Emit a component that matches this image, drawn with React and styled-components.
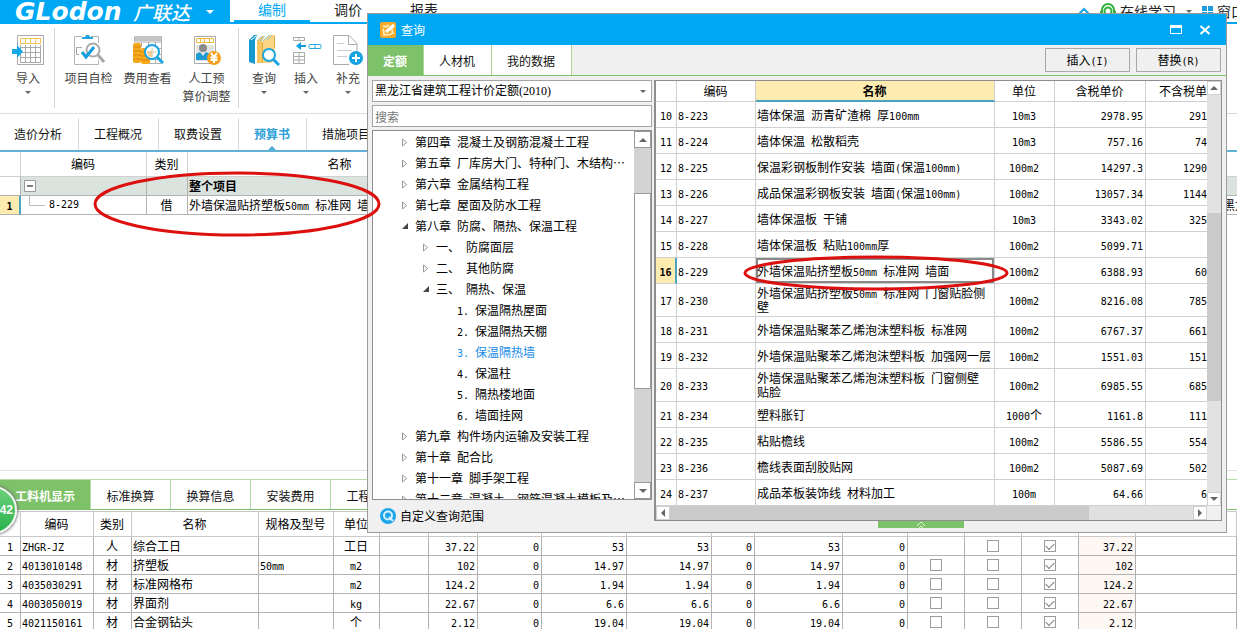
import React from 'react'
import styled, { css, createGlobalStyle } from 'styled-components'

const blue = '#00a8f3'
const green = '#7dc168'
const yellow = '#fdebb0'
const teal = '#4aa3c0'

const GlobalStyle = createGlobalStyle`
  * {
    box-sizing: border-box;
  }
  body {
    margin: 0;
    background: #fff;
    color: #000;
    font-family: 'Noto Sans CJK SC', 'Liberation Sans', sans-serif;
    font-size: 12px;
    line-height: 16px;
    overflow: hidden;
  }
  button, input, select {
    margin: 0;
    padding: 0;
    border: 0;
    border-radius: 0;
    background: none;
    color: inherit;
    font: inherit;
  }
  svg {
    display: block;
    flex: none;
  }
`

const Latin = styled.span`
  font-family: 'DejaVu Sans Mono', monospace;
  font-size: 10px;
  line-height: 10px;
  white-space: pre-wrap;
`

// half-width runs are set in a mono face, half as wide as a CJK character
const Text = ({ children }) =>
  String(children)
    .split(/([\x20-\x7e]+)/)
    .map((part, i) => (i % 2 ? <Latin key={i}>{part}</Latin> : part))

const Page = styled.div`
  position: relative;
  display: flex;
  flex-direction: column;
  height: 100vh;
  overflow: hidden;
`

/* header */

const Header = styled.header`
  display: flex;
  flex: none;
  height: 24px;
  font-size: 14px;
`

const Brand = styled.div`
  display: flex;
  align-items: center;
  width: 230px;
  padding-left: 15px;
  background: ${blue};
  color: #fff;
`

const BrandName = styled.span`
  width: 118px;
  font: italic bold 25px/24px 'DejaVu Sans', sans-serif;
  white-space: nowrap;
`

const BrandChinese = styled.span`
  margin-right: 16px;
  font-size: 19px;
  font-style: italic;
  font-weight: 500;
  line-height: 20px;
`

const Menu = styled.nav`
  display: flex;
  flex: 1;
  padding-left: 4px;
  border-bottom: 2px solid ${blue};
`

const MenuItem = styled.a`
  width: 76px;
  border-bottom: 2px solid ${p => (p.$active ? blue : 'transparent')};
  color: ${p => (p.$active ? blue : '#222')};
  line-height: 18px;
  text-align: center;
  text-decoration: none;
`

const HeaderTools = styled.div`
  display: flex;
  align-items: center;
  gap: 10px;
  margin-left: auto;
  width: 159px;
  height: 22px;
  overflow: hidden;
  white-space: nowrap;
`

const HeaderTool = styled.button`
  display: flex;
  flex: none;
  align-items: center;
  gap: 4px;
  color: #222;
`

/* toolbar */

const Toolbar = styled.div`
  display: flex;
  flex: none;
  height: 90px;
  padding: 4px 0;
  border-bottom: 1px solid #dcdcdc;
`

const ToolGroup = styled.div`
  display: flex;
  height: 80px;
  padding: 0 2px 0 4px;
  border-right: 1px solid #d8d8d8;
  &:last-child {
    border: 0;
  }
`

const ToolButton = styled.button`
  display: flex;
  flex-direction: column;
  align-items: center;
  width: ${p => p.$width}px;
  padding-top: 6px;
  color: #444;
  line-height: 18px;
  white-space: pre;
`

const ToolLabel = styled.span`
  margin: 3px 0 4px;
`

/* main tabs */

const MainTabs = styled.nav`
  display: flex;
  flex: none;
  height: 38px;
  margin-left: -1px;
  padding-top: 4px;
  border-bottom: 2px solid #62b1d6;
`

const MainTab = styled.a`
  display: flex;
  flex-direction: column;
  align-items: center;
  justify-content: flex-end;
  padding: 0 16px 0 15px;
  border-right: 1px solid #dadada;
  color: ${p => (p.$active ? '#2e9fd8' : '#111')};
  font-weight: ${p => (p.$active ? 'bold' : 'normal')};
  text-decoration: none;
  white-space: nowrap;
`

const TabMark = styled.span`
  height: 8px;
  padding-top: 4px;
`

/* tables */

const Table = styled.table`
  width: 100%;
  table-layout: fixed;
  border-collapse: separate;
  border-spacing: 0;
`

const cell = css`
  height: ${p => p.$height || 19}px;
  padding: 0 ${p => (p.$flush ? 0 : 2)}px 0 1px;
  border: solid ${p => p.$line || '#b2b2b2'};
  border-width: 0 ${p => (p.$flush ? 0 : 1)}px 1px 0;
  overflow: hidden;
  font-weight: ${p => (p.$bold ? 'bold' : 'normal')};
  text-align: ${p => p.$align || 'left'};
  white-space: nowrap;
`

const Th = styled.th`
  ${cell};
`

const Td = styled.td`
  ${cell};
  background: ${p => p.$bg || 'transparent'};
`

const RowNumber = styled.th`
  ${cell};
  padding: 0;
  ${p =>
    p.$current &&
    css`
      border-right: 2px solid ${teal};
      background: ${yellow};
      font-weight: bold;
    `}
`

const Budget = styled.section`
  flex: 1 0 318px;
`

const GroupRow = styled.tr`
  background: #dbe3df;
`

const Collapse = styled.button`
  display: block;
  margin-left: 2px;
`

const CodeWithBranch = styled.div`
  display: flex;
  align-items: center;
  gap: 4px;
`

/* bottom panel */

const Resources = styled.section`
  flex: none;
  padding-top: 8px;
  border-top: 1px solid #dfdfe4;
`

const ResourceTabs = styled.nav`
  display: flex;
  height: 31px;
  margin-bottom: 1px;
  border-top: 1px solid #b5dda9;
  border-bottom: 1px solid ${green};
`

const ResourceTab = styled.a`
  width: ${p => (p.$active ? 91 : 80)}px;
  padding: ${p => (p.$active ? '0 0 0 15px' : '0')};
  border-right: 1px solid #b5dda9;
  background: ${p => (p.$active ? green : '#fff')};
  color: ${p => (p.$active ? '#fff' : '#111')};
  font-weight: ${p => (p.$active ? 'bold' : 'normal')};
  line-height: 32px;
  text-align: ${p => (p.$active ? 'left' : 'center')};
  text-decoration: none;
  white-space: nowrap;
`

const ResourceTable = styled(Table)`
  border-top: 1px solid #c8c8c8;
`

const Checkbox = styled.input.attrs({ type: 'checkbox' })`
  appearance: none;
  display: grid;
  place-items: center;
  width: 12px;
  height: 12px;
  margin: 0 auto;
  border: 1px solid #9c9c9c;
  background: #fff;
  &:checked::after {
    content: '';
    width: 7px;
    height: 4px;
    margin-bottom: 2px;
    border: solid #777;
    border-width: 0 0 1px 1px;
    transform: rotate(-45deg);
  }
`

const Badge = styled.div`
  position: absolute;
  top: 486px;
  left: -31px;
  width: 48px;
  height: 48px;
  padding-right: 2px;
  border: 2px solid #f2f7f2;
  border-radius: 50%;
  background: linear-gradient(#6fd07c, #28b14c);
  box-shadow: 0 0 3px 1px #777;
  color: #fff;
  font: bold 12px/44px 'Liberation Sans', sans-serif;
  text-align: right;
`

/* query dialog */

const Dialog = styled.div`
  position: absolute;
  top: 13px;
  left: 367px;
  right: 10px;
  border: 1px solid #9b9b9b;
  background: #f0f0f0;
`

const TitleBar = styled.div`
  display: flex;
  align-items: center;
  height: 31px;
  padding: 0 14px 0 12px;
  background: ${blue};
  color: #fff;
`

const Title = styled.span`
  flex: 1;
  padding-left: 5px;
`

const WindowButton = styled.button`
  width: 13px;
  margin-left: 16px;
`

const DialogTabs = styled.div`
  display: flex;
  height: 31px;
  border-bottom: 1px solid ${green};
`

const DialogTab = styled.button`
  padding: 2px 16px 0 15px;
  border-right: 1px solid #a9d89b;
  background: ${p => (p.$active ? green : '#fff')};
  color: ${p => (p.$active ? '#fff' : '#111')};
  font-weight: ${p => (p.$active ? 'bold' : 'normal')};
`

const Actions = styled.div`
  display: flex;
  gap: 6px;
  margin-left: auto;
  padding: 3px 5px 3px 0;
`

const ActionButton = styled.button`
  width: 85px;
  border: 1px solid #a9a9a9;
`

const DialogBody = styled.div`
  display: grid;
  grid-template-columns: 280px minmax(0, 1fr);
  gap: 2px;
  padding: 4px 4px 3px;
`

const Side = styled.div`
  display: flex;
  flex-direction: column;
  gap: 3px;
`

const SelectBox = styled.div`
  display: grid;
  align-items: center;
  height: 22px;
  border: 1px solid #a5a5a5;
  background: #fff;
  > * {
    grid-area: 1 / 1;
  }
  > svg {
    justify-self: end;
    margin-right: 5px;
    pointer-events: none;
  }
`

const Select = styled.select`
  appearance: none;
  height: 20px;
  padding-left: 2px;
  font-family: 'Liberation Serif', 'Noto Sans CJK SC', serif;
`

const Search = styled.input`
  height: 22px;
  padding-left: 2px;
  border: 1px solid #a5a5a5;
  background: #fff;
  &::placeholder {
    color: #777;
  }
`

const Tree = styled.div`
  display: flex;
  height: 370px;
  border: 1px solid #8d8d92;
  background: #fff;
`

const TreeList = styled.ul`
  flex: 1;
  margin: 0;
  padding: 0;
  overflow: hidden;
  list-style: none;
`

const TreeItem = styled.li`
  display: flex;
  align-items: center;
  gap: 6px;
  height: 21px;
  padding-top: 1px;
  padding-left: ${p => 28 + p.$level * 21}px;
  color: ${p => (p.$selected ? '#1a8ce8' : 'inherit')};
  white-space: nowrap;
`

const TreeGap = styled.span`
  width: 8px;
`

const ScrollColumn = styled.div`
  display: flex;
  flex-direction: column;
  flex: none;
  width: ${p => p.$size}px;
  background: ${p => p.$track};
`

const ScrollRow = styled.div`
  display: flex;
  height: 14px;
  background: #e0e0e0;
`

const Thumb = styled.div`
  flex: none;
  margin-top: ${p => p.$offset}px;
  height: ${p => p.$length}px;
  border: ${p => (p.$outlined ? '1px solid #999' : '0')};
  background: ${p => (p.$outlined ? '#fff' : '#cacaca')};
`

const ThumbAcross = styled.div`
  flex: 0 1 419px;
  background: #cacaca;
`

const ScrollButton = styled.button`
  display: flex;
  flex: none;
  align-items: center;
  justify-content: center;
  width: ${p => p.$size}px;
  height: ${p => p.$size}px;
  border: 1px solid ${p => p.$edge || '#d0d0d0'};
  background: #fff;
`

const Spacer = styled.div`
  flex: 1;
`

const Corner = styled.div`
  width: 14px;
  background: #f0f0f0;
`

const Footer = styled.a`
  display: flex;
  align-items: center;
  gap: 4px;
  height: 26px;
  padding: 0 0 0 8px;
  color: inherit;
  text-decoration: none;
`

const Norms = styled.div`
  border: 1px solid #8d8d92;
  border-left-width: 2px;
  background: #fff;
`

const NormsView = styled.div`
  display: flex;
`

const NormsClip = styled.div`
  flex: 1;
  min-width: 0;
`

const NameHeading = styled(Th)`
  border-bottom: 2px solid ${teal};
  background: ${yellow};
`

const NameCell = styled(Td)`
  line-height: 14px;
  white-space: pre-line;
  ${p =>
    p.$current &&
    css`
      box-shadow: inset 0 0 0 2px #898989;
    `}
`

const Handle = styled.button`
  display: flex;
  justify-content: center;
  width: 86px;
  height: 7px;
  margin-left: 224px;
  background: ${green};
`

const Marks = styled.svg`
  position: absolute;
  top: 0;
  left: 0;
  pointer-events: none;
`

/* icons */

const arrowPoints = {
  down: '0,0 8,0 4,4',
  up: '0,4 8,4 4,0',
  left: '5,0 5,8 1,4',
  right: '1,0 1,8 5,4',
}

const Arrow = ({ dir = 'down', size = 8, color = '#666' }) => (
  <svg
    width={size}
    height={dir === 'up' || dir === 'down' ? size / 2 : size}
    viewBox={dir === 'up' || dir === 'down' ? '0 0 8 4' : '-1 0 8 8'}
  >
    <polygon points={arrowPoints[dir]} fill={color} />
  </svg>
)

const ImportIcon = () => (
  <svg width="32" height="32" viewBox="0 0 32 32" fill="none">
    <path d="M5.500 1.500h26v29h-26z" stroke="#aaa" />
    <path d="M8 4.500h21M8 9.500h21M8.500 4v5M13.500 4v5M18.500 4v5M23.500 4v5M28.500 4v5" stroke="#f5c454" />
    <path d="M8 13.500h21M8 18.500h21M8 23.500h21M8 28.500h21M8.500 11v17M13.500 11v17M18.500 11v17M23.500 11v17M28.500 11v17" stroke="#aaa" />
    <path d="M0 15h5v-4l6 6.500-6 6.500v-4H0z" fill="#12a9e6" />
  </svg>
)

const CheckIcon = () => (
  <svg width="32" height="32" viewBox="0 0 32 32" fill="none">
    <path d="M9 2.500H1.500v28h24V26M18 2.500h7.500V9" stroke="#b5b5b5" />
    <path d="M9 5V3h3l1-2h3l1 2h3v2z" fill="#27a3dc" />
    <path d="M9 13.500H3.500v7H6" stroke="#aaa" />
    <circle cx="20" cy="16" r="6.500" stroke="#aaa" strokeWidth="2" />
    <path d="M25 21l6 7" stroke="#aaa" strokeWidth="3" />
    <path d="M9 18l4 5 8-10" stroke="#119ddf" strokeWidth="3" />
  </svg>
)

const CostIcon = () => (
  <svg width="32" height="32" viewBox="0 0 32 32" fill="none">
    <path d="M2.500 2.500h27v27H15M29.500 8H2.500V3M9.500 8v5M16.500 8v21M23.500 8v21M10 14.500h19M10 20.500h19M10 25.500h19" stroke="#b0b0b0" />
    <path d="M3 2h26v5H3z" fill="#c4c4c4" />
    <rect x="1" y="9" width="8" height="20" rx="2" fill="#f7a91c" />
    <rect x="9" y="14" width="9" height="16" rx="2" fill="#f7a91c" />
    <path d="M1 13h8M1 17h8M1 21h8M1 25h8M9 18h9M9 22h9M9 26h9" stroke="#d98608" />
    <circle cx="20" cy="18" r="7" fill="#fff" stroke="#1ba4e2" strokeWidth="2" />
    <path d="M15 17h5v6c-3 0-5-2-5-6z" fill="#f9cf92" />
    <path d="M20 14v9M16 18h8" stroke="#d8c7a5" />
    <path d="M25 23l6 6" stroke="#1ba4e2" strokeWidth="3" />
  </svg>
)

const LabourIcon = () => (
  <svg width="32" height="32" viewBox="0 0 32 32" fill="none">
    <path d="M3.500 2.500h21v27h-21z" stroke="#aaa" />
    <path d="M5.500 4.500h17v4h-17zM9.500 4v5M13.500 4v5M18.500 4v5" stroke="#f4b934" />
    <path d="M5 11h18v16H5z" fill="#e4e4e4" />
    <circle cx="12" cy="14" r="4" fill="#8b8b8b" />
    <path d="M5 26v-6l4-2 3 4 3-4 4 2v6z" fill="#1d9bd2" />
    <circle cx="23" cy="24" r="7" fill="#f7a11a" />
    <path d="M20 19l3 4 3-4M23 23v6M19.500 23.500h7M19.500 26h7" stroke="#fff" strokeWidth="2" />
  </svg>
)

const QueryIcon = () => (
  <svg width="32" height="32" viewBox="0 0 32 32" fill="none">
    <path d="M1 6l5-5h3L7 6v24l-6-2z" fill="#1599cf" />
    <path d="M3 6l5-4" stroke="#fff" />
    <path d="M9 7l5-5h3l-3 5v22H9z" fill="#f5c661" />
    <path d="M15 7l6-6h6v25l-4 3h-8z" fill="#f9d584" />
    <path d="M9 7l5-5M12 7l5-5M15 7l6-6M19 6l5-5" stroke="#8cc9d8" />
    <path d="M14.500 8v21M26.500 2v12" stroke="#e0aa42" />
    <circle cx="21" cy="21" r="6" fill="#fff" stroke="#1ba4e2" strokeWidth="2" />
    <path d="M25 25l6 6" stroke="#1ba4e2" strokeWidth="3" />
  </svg>
)

const InsertIcon = () => (
  <svg width="32" height="32" viewBox="0 0 32 32" fill="none">
    <path d="M3.500 3.500h11v3h-11zM9 3v4M3.500 18.500h11v11h-11zM9 18v12M3 22.500h12M3 26h12" stroke="#aaa" />
    <path d="M6 12l5-4v3h5v2h-5v3z" fill="#119fdf" />
    <rect x="19" y="10.500" width="12" height="4" rx="1" stroke="#29a9df" />
    <path d="M25 10v5" stroke="#29a9df" />
  </svg>
)

const AddIcon = () => (
  <svg width="32" height="32" viewBox="0 0 32 32" fill="none">
    <path d="M17 30.500H1.500v-29H17l8 8V17M16.500 2v8.500H25" stroke="#aaa" />
    <path d="M5 9.500h7M5 16.500h15M5 22.500h10" stroke="#ccc" />
    <circle cx="24" cy="24" r="7" fill="#17a2e1" />
    <path d="M24 20v8M20 24h8" stroke="#fff" strokeWidth="2" />
  </svg>
)

const HeadsetIcon = () => (
  <svg width="16" height="18" viewBox="0 0 16 18" fill="none" stroke="#2fb13c">
    <path d="M2 11V8a6 6 0 0 1 12 0v3" strokeWidth="2" />
    <circle cx="8" cy="9" r="3.500" strokeWidth="2" />
    <path d="M1 9v4M15 9v4" strokeWidth="2" />
    <path d="M5 14c2 2 5 2 7 0" />
  </svg>
)

const GridIcon = () => (
  <svg width="11" height="11" viewBox="0 0 11 11" fill="#1b9de0">
    <path d="M0 0h5v5H0zM6 0h5v5H6zM0 6h5v5H0zM6 6h5v5H6z" />
  </svg>
)

const DialogIcon = () => (
  <svg width="16" height="16" viewBox="0 0 16 16" fill="none">
    <rect width="16" height="16" rx="2" fill="#f7a827" />
    <path d="M3 4c2 1 4 1 6-1M3 7c1 2 1 4 1 6 3 0 6 0 9-2-1-1-1-3-1-5" stroke="#ffe6b0" strokeWidth="2" />
    <path d="M6 10l8-7" stroke="#fff" strokeWidth="3" />
  </svg>
)

const RangeIcon = () => (
  <svg width="16" height="16" viewBox="0 0 16 16" fill="none">
    <circle cx="8" cy="8" r="8" fill="#1ea5e8" />
    <circle cx="8" cy="7.500" r="4" stroke="#d8f1ff" strokeWidth="2" />
    <path d="M9 9l4 4" stroke="#d8f1ff" strokeWidth="2" />
  </svg>
)

const TreeArrow = ({ open }) => (
  <svg width="8" height="9" viewBox="0 0 8 9">
    {open ? (
      <path d="M7 1v6H1z" fill="#444" />
    ) : (
      <path d="M1.500 1v7l4-3.500z" fill="#fff" stroke="#999" />
    )}
  </svg>
)

/* data */

const toolGroups = [
  [{ label: '导入', width: 48, icon: ImportIcon, menu: true }],
  [
    { label: '项目自检', width: 59, icon: CheckIcon },
    { label: '费用查看', width: 59, icon: CostIcon },
    { label: '人工预\n算价调整', width: 59, icon: LabourIcon },
  ],
  [
    { label: '查询', width: 42, icon: QueryIcon, menu: true },
    { label: '插入', width: 42, icon: InsertIcon, menu: true },
    { label: '补充', width: 42, icon: AddIcon, menu: true },
  ],
]

const mainTabs = ['造价分析', '工程概况', '取费设置', '预算书', '措施项目']
const resourceTabs = ['工料机显示', '标准换算', '换算信息', '安装费用', '工程费用']

const resourceColumns = [
  21, 73, 38, 127, 75, 46, 49, 49, 64, 85, 85, 43, 88, 65, 57, 57, 57, 57,
]
const resourceHeads = ['', '编码', '类别', '名称', '规格及型号', '单位']

const resources = [
  ['ZHGR-JZ', '人', '综合工日', '', '工日', '37.22', '53'],
  ['4013010148', '材', '挤塑板', '50mm', 'm2', '102', '14.97'],
  ['4035030291', '材', '标准网格布', '', 'm2', '124.2', '1.94'],
  ['4003050019', '材', '界面剂', '', 'kg', '22.67', '6.6'],
  ['4021150161', '材', '合金钢钻头', '', '个', '2.12', '19.04'],
]

const tree = [
  [0, '第四章 混凝土及钢筋混凝土工程', 'closed'],
  [0, '第五章 厂库房大门、特种门、木结构…', 'closed'],
  [0, '第六章 金属结构工程', 'closed'],
  [0, '第七章 屋面及防水工程', 'closed'],
  [0, '第八章 防腐、隔热、保温工程', 'open'],
  [1, '一、 防腐面层', 'closed'],
  [1, '二、 其他防腐', 'closed'],
  [1, '三、 隔热、保温', 'open'],
  [2, '1. 保温隔热屋面'],
  [2, '2. 保温隔热天棚'],
  [2, '3. 保温隔热墙'],
  [2, '4. 保温柱'],
  [2, '5. 隔热楼地面'],
  [2, '6. 墙面挂网'],
  [0, '第九章 构件场内运输及安装工程', 'closed'],
  [0, '第十章 配合比', 'closed'],
  [0, '第十一章 脚手架工程', 'closed'],
  [0, '第十二章 混凝土、钢筋混凝土模板及…', 'closed'],
]

const norms = [
  [10, '8-223', '墙体保温 沥青矿渣棉 厚100mm', '10m3', '2978.95', '291'],
  [11, '8-224', '墙体保温 松散稻壳', '10m3', '757.16', '74'],
  [12, '8-225', '保温彩钢板制作安装 墙面(保温100mm)', '100m2', '14297.3', '1290'],
  [13, '8-226', '成品保温彩钢板安装 墙面(保温100mm)', '100m2', '13057.34', '1144'],
  [14, '8-227', '墙体保温板 干铺', '10m3', '3343.02', '325'],
  [15, '8-228', '墙体保温板 粘贴100mm厚', '100m2', '5099.71', ''],
  [16, '8-229', '外墙保温贴挤塑板50mm 标准网 墙面', '100m2', '6388.93', '60'],
  [17, '8-230', '外墙保温贴挤塑板50mm 标准网 门窗贴脸侧\n壁', '100m2', '8216.08', '785'],
  [18, '8-231', '外墙保温贴聚苯乙烯泡沫塑料板 标准网', '100m2', '6767.37', '661'],
  [19, '8-232', '外墙保温贴聚苯乙烯泡沫塑料板 加强网一层', '100m2', '1551.03', '151'],
  [20, '8-233', '外墙保温贴聚苯乙烯泡沫塑料板 门窗侧壁\n贴脸', '100m2', '6985.55', '685'],
  [21, '8-234', '塑料胀钉', '1000个', '1161.8', '111'],
  [22, '8-235', '粘贴檐线', '100m2', '5586.55', '554'],
  [23, '8-236', '檐线表面刮胶贴网', '100m2', '5087.69', '502'],
  [24, '8-237', '成品苯板装饰线 材料加工', '100m', '64.66', '6'],
]

const Columns = ({ widths }) => (
  <colgroup>
    {widths.map((width, i) => (
      <col key={i} width={width} />
    ))}
    <col />
  </colgroup>
)

const AppHeader = () => (
  <Header>
    <Brand>
      <BrandName>GLodon</BrandName>
      <BrandChinese>广联达</BrandChinese>
      <Arrow color="#fff" />
    </Brand>
    <Menu>
      <MenuItem href="#edit" $active>
        编制
      </MenuItem>
      <MenuItem href="#price">调价</MenuItem>
      <MenuItem href="#report">报表</MenuItem>
      <HeaderTools>
        <HeaderTool aria-label="收起">
          <svg width="12" height="8" viewBox="0 0 12 8" fill="none">
            <path d="M1 7l5-5 5 5" stroke="#1ba0e0" strokeWidth="2" />
          </svg>
        </HeaderTool>
        <HeaderTool>
          <HeadsetIcon />
          在线学习
        </HeaderTool>
        <Arrow size={6} />
        <HeaderTool>
          <GridIcon />
          窗口
        </HeaderTool>
      </HeaderTools>
    </Menu>
  </Header>
)

const AppToolbar = () => (
  <Toolbar>
    {toolGroups.map((tools, i) => (
      <ToolGroup key={i}>
        {tools.map(({ label, width, icon: Icon, menu }) => (
          <ToolButton key={label} $width={width}>
            <Icon />
            <ToolLabel>{label}</ToolLabel>
            {menu && <Arrow size={6} />}
          </ToolButton>
        ))}
      </ToolGroup>
    ))}
  </Toolbar>
)

const BudgetTable = () => (
  <Budget>
    <Table>
      <colgroup>
        <col width="21" />
        <col width="126" />
        <col width="41" />
        <col width="305" />
        <col />
        <col width="15" />
      </colgroup>
      <thead>
        <tr>
          {['', '编码', '类别', '名称', '', ''].map((head, i) => (
            <Th key={i} $height={25} $align="center" $line="#d0d0d0" $flush={i === 5}>
              {head}
            </Th>
          ))}
        </tr>
      </thead>
      <tbody>
        <GroupRow>
          <Td $bg="#fff" />
          <Td>
            <Collapse aria-label="折叠">
              <svg width="12" height="12" viewBox="0 0 12 12" fill="none">
                <path d="M.5.5h11v11H.5z" fill="#fff" stroke="#999" />
                <path d="M3 6h6" stroke="#000" />
              </svg>
            </Collapse>
          </Td>
          <Td />
          <Td $bold>整个项目</Td>
          <Td />
          <Td $flush />
        </GroupRow>
        <tr>
          <RowNumber $align="center" $current>
            <Text>1</Text>
          </RowNumber>
          <Td>
            <CodeWithBranch>
              <svg width="23" height="18" viewBox="0 0 23 18" fill="none">
                <path d="M7.500 0v9.500H23" stroke="#bbb" />
              </svg>
              <Text>8-229</Text>
            </CodeWithBranch>
          </Td>
          <Td $align="center">借</Td>
          <Td>
            <Text>外墙保温贴挤塑板50mm 标准网 墙面</Text>
          </Td>
          <Td />
          <Td $flush>黑龙</Td>
        </tr>
      </tbody>
    </Table>
  </Budget>
)

const ResourceRow = ({ row, index }) => {
  const [code, kind, name, spec, unit, amount, price] = row
  const numbers = ['', amount, '0', price, price, '0', price, '0']
  return (
    <tr>
      <RowNumber $align="center">
        <Text>{index + 1}</Text>
      </RowNumber>
      <Td>
        <Text>{code}</Text>
      </Td>
      <Td $align="center">{kind}</Td>
      <Td>{name}</Td>
      <Td>
        <Text>{spec}</Text>
      </Td>
      <Td $align="center">
        <Text>{unit}</Text>
      </Td>
      {numbers.map((value, i) => (
        <Td key={i} $align="right">
          <Text>{value}</Text>
        </Td>
      ))}
      <Td>{index > 0 && <Checkbox aria-label={`${name} 暂估`} />}</Td>
      <Td>
        <Checkbox aria-label={`${name} 锁定`} />
      </Td>
      <Td>
        <Checkbox aria-label={`${name} 计价`} defaultChecked />
      </Td>
      <Td $align="right" $bg="#fdf8f4">
        <Text>{amount}</Text>
      </Td>
      <Td />
    </tr>
  )
}

const ResourcePanel = () => (
  <Resources>
    <ResourceTabs>
      {resourceTabs.map((tab, i) => (
        <ResourceTab key={tab} href={`#resource-${i}`} $active={i === 0}>
          {tab}
        </ResourceTab>
      ))}
    </ResourceTabs>
    <ResourceTable>
      <Columns widths={resourceColumns} />
      <thead>
        <tr>
          {Array.from({ length: 19 }, (_, i) => (
            <Th key={i} $height={25} $align="center" $line="#cacaca">
              {resourceHeads[i]}
            </Th>
          ))}
        </tr>
      </thead>
      <tbody>
        {resources.map((row, i) => (
          <ResourceRow key={row[0]} row={row} index={i} />
        ))}
      </tbody>
    </ResourceTable>
  </Resources>
)

const ChapterTree = () => (
  <Tree>
    <TreeList>
      {tree.map(([level, label, state]) => (
        <TreeItem key={label} $level={level} $selected={label === '3. 保温隔热墙'}>
          {state ? <TreeArrow open={state === 'open'} /> : <TreeGap />}
          <span>
            <Text>{label}</Text>
          </span>
        </TreeItem>
      ))}
    </TreeList>
    <ScrollColumn $size={17} $track="#d3d3d3">
      <ScrollButton $size={17} $edge="#999" aria-label="向上">
        <Arrow dir="up" />
      </ScrollButton>
      <Thumb $offset={45} $length={196} $outlined />
      <Spacer />
      <ScrollButton $size={17} $edge="#999" aria-label="向下">
        <Arrow />
      </ScrollButton>
    </ScrollColumn>
  </Tree>
)

const NormTable = () => (
  <Norms>
    <NormsView>
      <NormsClip>
        <Table>
          <Columns widths={[21, 79, 239, 60, 91]} />
          <thead>
            <tr>
              <Th $height={21} $line="#d0d0d0" />
              <Th $height={21} $line="#d0d0d0" $align="center">
                编码
              </Th>
              <NameHeading $height={21} $line="#d0d0d0" $align="center" $bold>
                名称
              </NameHeading>
              <Th $height={21} $line="#d0d0d0" $align="center">
                单位
              </Th>
              <Th $height={21} $line="#d0d0d0" $align="center">
                含税单价
              </Th>
              <Th $height={21} $line="#d0d0d0" $align="right" $flush>
                不含税单
              </Th>
            </tr>
          </thead>
          <tbody>
            {norms.map(([no, code, name, unit, price, net]) => {
              const line = {
                $height: name.includes('\n') ? 33 : 26,
                $line: '#d0d0d0',
              }
              return (
                <tr key={no}>
                  <RowNumber {...line} $align="center" $current={no === 16}>
                    <Text>{no}</Text>
                  </RowNumber>
                  <Td {...line}>
                    <Text>{code}</Text>
                  </Td>
                  <NameCell {...line} $current={no === 16}>
                    <Text>{name}</Text>
                  </NameCell>
                  <Td {...line} $align="center">
                    <Text>{unit}</Text>
                  </Td>
                  <Td {...line} $align="right">
                    <Text>{price}</Text>
                  </Td>
                  <Td {...line} $align="right" $flush>
                    <Text>{net}</Text>
                  </Td>
                </tr>
              )
            })}
          </tbody>
        </Table>
      </NormsClip>
      <ScrollColumn $size={14} $track="#e2e2e2">
        <ScrollButton $size={14} aria-label="向上">
          <Arrow dir="up" />
        </ScrollButton>
        <Thumb $offset={118} $length={188} />
        <Spacer />
        <ScrollButton $size={14} aria-label="向下">
          <Arrow />
        </ScrollButton>
      </ScrollColumn>
    </NormsView>
    <ScrollRow>
      <ScrollButton $size={14} aria-label="向左">
        <Arrow dir="left" />
      </ScrollButton>
      <ThumbAcross />
      <Spacer />
      <ScrollButton $size={14} aria-label="向右">
        <Arrow dir="right" />
      </ScrollButton>
      <Corner />
    </ScrollRow>
  </Norms>
)

const QueryDialog = () => (
  <Dialog role="dialog" aria-label="查询">
    <TitleBar>
      <DialogIcon />
      <Title>查询</Title>
      <WindowButton aria-label="最大化">
        <svg width="12" height="9" viewBox="0 0 12 9" fill="none">
          <path d="M.5 1v7.500h11V1" stroke="#fff" />
          <path d="M0 1.500h12" stroke="#fff" strokeWidth="3" />
        </svg>
      </WindowButton>
      <WindowButton aria-label="关闭">
        <svg width="12" height="10" viewBox="0 0 12 10" fill="none">
          <path d="M1.500 1l9 8M10.500 1l-9 8" stroke="#fff" strokeWidth="2" />
        </svg>
      </WindowButton>
    </TitleBar>
    <DialogTabs>
      <DialogTab $active>定额</DialogTab>
      <DialogTab>人材机</DialogTab>
      <DialogTab>我的数据</DialogTab>
      <Actions>
        <ActionButton>
          <Text>插入(I)</Text>
        </ActionButton>
        <ActionButton>
          <Text>替换(R)</Text>
        </ActionButton>
      </Actions>
    </DialogTabs>
    <DialogBody>
      <Side>
        <SelectBox>
          <Select aria-label="定额库">
            <option>黑龙江省建筑工程计价定额(2010)</option>
          </Select>
          <Arrow size={6} />
        </SelectBox>
        <Search aria-label="搜索" placeholder="搜索" />
        <ChapterTree />
        <Footer href="#range">
          <RangeIcon />
          自定义查询范围
        </Footer>
      </Side>
      <div>
        <NormTable />
        <Handle aria-label="展开">
          <svg width="10" height="7" viewBox="0 0 10 7" fill="none">
            <path d="M1 5l4-4 4 4M3 7l2-2 2 2" stroke="#e4f5df" />
          </svg>
        </Handle>
      </div>
    </DialogBody>
  </Dialog>
)

const App = () => (
  <Page>
    <GlobalStyle />
    <AppHeader />
    <AppToolbar />
    <MainTabs>
      {mainTabs.map((tab, i) => (
        <MainTab key={tab} href={`#tab-${i}`} $active={i === 3}>
          {tab}
          <TabMark>{i === 3 && <Arrow dir="up" color="#4fa9d6" />}</TabMark>
        </MainTab>
      ))}
    </MainTabs>
    <BudgetTable />
    <ResourcePanel />
    <Badge>42</Badge>
    <QueryDialog />
    <Marks width="1010" height="300" fill="none" stroke="#dd1010" strokeWidth="3">
      <ellipse cx="237" cy="204" rx="142" ry="31" />
      <ellipse cx="876" cy="273" rx="131" ry="16" />
    </Marks>
  </Page>
)

export default App
